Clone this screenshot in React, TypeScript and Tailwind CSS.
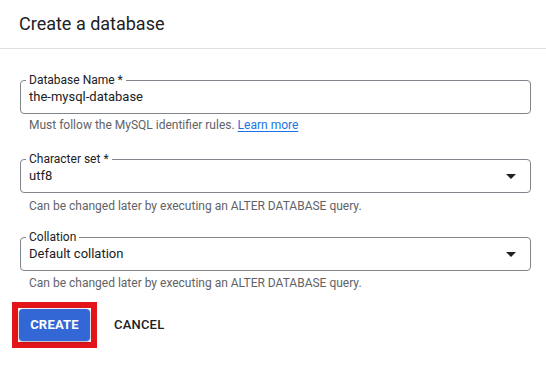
import React from "react";

function Caret() {
  return (
    <svg width="10" height="5" viewBox="0 0 10 5" className="shrink-0">
      <path d="M0 0 L10 0 L5 5 Z" fill="#202124" />
    </svg>
  );
}

function Field({
  label,
  value,
  select,
  className,
}: {
  label: string;
  value: string;
  select?: boolean;
  className?: string;
}) {
  return (
    <fieldset
      className={
        "m-0 w-[511px] border border-[#80868b] rounded-[4px] pl-[8px] pr-[14px] pb-[6px] min-w-0 " +
        (className ?? "")
      }
    >
      <legend className="px-[3px] -ml-[3px] text-[12px] leading-[14px] text-[#202124]">
        {label}
      </legend>
      <div className="flex items-center justify-between h-[20px] text-[13px] leading-[20px] text-[#202124]">
        <span>{value}</span>
        {select && <Caret />}
      </div>
    </fieldset>
  );
}

export default function App() {
  return (
    <div
      className="w-[546px] h-[366px] bg-white overflow-hidden"
      style={{ fontFamily: "Roboto, 'Noto Sans', Arial, sans-serif" }}
    >
      <div className="h-[49px] border-b border-[#e0e0e0] pl-[19px] flex items-center">
        <h1 className="text-[18px] leading-[24px] text-[#202124] font-normal pb-[1px]">
          Create a database
        </h1>
      </div>
      <div className="pl-[20px] flex flex-col">
        <Field className="mt-[24px]" label="Database Name *" value="the-mysql-database" />
        <p className="mt-[3px] pl-[9px] text-[12px] leading-[16px] text-[#5f6368]">
          Must follow the MySQL identifier rules.{" "}
          <span className="text-[#1a73e8] underline underline-offset-2">Learn more</span>
        </p>
        <Field className="mt-[19px]" label="Character set *" value="utf8" select />
        <p className="mt-[5px] pl-[9px] text-[12px] leading-[16px] text-[#5f6368]">
          Can be changed later by executing an ALTER DATABASE query.
        </p>
        <Field className="mt-[16px]" label="Collation" value="Default collation" select />
        <p className="mt-[4px] pl-[9px] text-[12px] leading-[16px] text-[#5f6368]">
          Can be changed later by executing an ALTER DATABASE query.
        </p>
        <div className="mt-[11px] -ml-[8px] flex items-center">
          <div className="border-[6px] border-[#e4141b] p-[1px]">
            <button className="w-[71px] h-[32px] rounded-[4px] bg-[#3367d6] text-white text-[13px] font-bold tracking-[0.2px] shadow-[0_1px_3px_rgba(0,0,0,0.35)]">
              CREATE
            </button>
          </div>
          <button className="ml-[17px] text-[13px] font-medium text-[#202124] tracking-[0.2px]">
            CANCEL
          </button>
        </div>
      </div>
    </div>
  );
}
